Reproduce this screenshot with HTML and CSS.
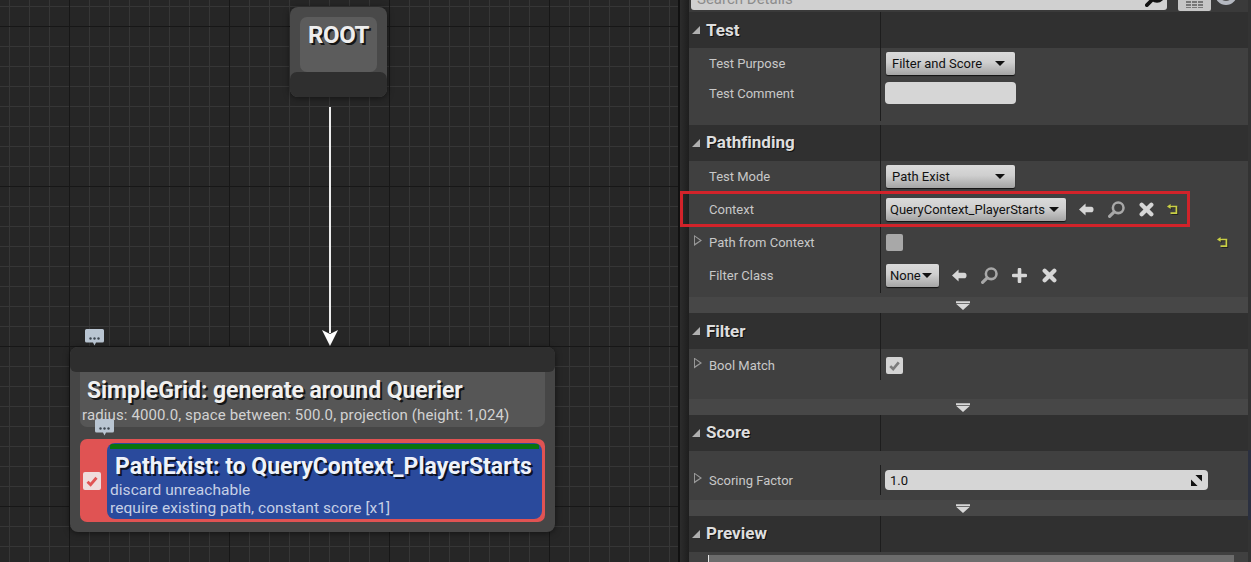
FILE: index.html
```html
<!DOCTYPE html>
<html lang="en">
<head>
    <meta charset="UTF-8">
    <title>Environment Query</title>
    <link rel="stylesheet" href="styles.css">
</head>
<body>

    <svg class="icon-defs" width="0" height="0">
        <symbol id="i-arrow" viewBox="0 0 16 14">
            <path d="M0 7 L7 0.5 V4 H13 Q15.5 4 15.5 7 Q15.5 10 13 10 H7 V13.5 Z" fill="currentColor"/>
        </symbol>
        <symbol id="i-search" viewBox="0 0 16 16">
            <circle cx="9.6" cy="6.4" r="5" fill="none" stroke="currentColor" stroke-width="2.4"/>
            <path d="M5.8 10.2 L1.5 14.5" stroke="currentColor" stroke-width="3" stroke-linecap="round"/>
        </symbol>
        <symbol id="i-close" viewBox="0 0 14 14">
            <path d="M2.5 2.5 L11.5 11.5 M11.5 2.5 L2.5 11.5" stroke="currentColor" stroke-width="4" stroke-linecap="round"/>
        </symbol>
        <symbol id="i-plus" viewBox="0 0 14 14">
            <path d="M7 1.5 V12.5 M1.5 7 H12.5" stroke="currentColor" stroke-width="3.4" stroke-linecap="round"/>
        </symbol>
        <symbol id="i-reset" viewBox="0 0 11 11">
            <path d="M0 2.5 L3.6 0 V5 Z" fill="currentColor"/>
            <path d="M3 2.5 H9.4 V9.2 H3.5" fill="none" stroke="currentColor" stroke-width="1.7"/>
        </symbol>
        <symbol id="i-bubble" viewBox="0 0 19 17">
            <path d="M1.5 0 H17.5 Q19 0 19 1.5 V12 Q19 13.5 17.5 13.5 H11 L9.5 16.5 L8 13.5 H1.5 Q0 13.5 0 12 V1.5 Q0 0 1.5 0 Z" fill="#b9c5d2"/>
            <circle cx="5.5" cy="9.5" r="1.2" fill="#3c4650"/>
            <circle cx="9.5" cy="9.5" r="1.2" fill="#3c4650"/>
            <circle cx="13.5" cy="9.5" r="1.2" fill="#3c4650"/>
        </symbol>
        <symbol id="i-check" viewBox="0 0 14 14">
            <path d="M3.5 7.5 L5.9 9.9 L10.5 4.5" fill="none" stroke="currentColor" stroke-width="2.2"/>
        </symbol>
        <symbol id="i-more" viewBox="0 0 16 10">
            <path d="M0 0 H16 V2 H0 Z M0 3 H16 L8 10 Z" fill="#d8d8d8"/>
        </symbol>
    </svg>

    <div class="app">

        <!-- graph -->
        <div class="canvas">
            <div class="root-node">
                <div class="root-inner">ROOT</div>
                <div class="root-foot"></div>
            </div>

            <div class="wire"></div>
            <svg class="wire-head" viewBox="0 0 16 16"><path d="M0 0 L8 4 L16 0 L8 16 Z" fill="#fff"/></svg>

            <svg class="bubble bubble-gen"><use href="#i-bubble"/></svg>

            <div class="query-node">
                <div class="query-head"></div>
                <div class="generator">
                    <div class="node-title gen-title">SimpleGrid: generate around Querier</div>
                    <div class="node-sub">radius: 4000.0, space between: 500.0, projection (height: 1,024)</div>
                </div>
                <div class="test-box">
                    <div class="test-toggle">
                        <span class="test-check"><svg><use href="#i-check"/></svg></span>
                    </div>
                    <div class="test-body">
                        <div class="test-bar"></div>
                        <div class="node-title test-title">PathExist: to QueryContext_PlayerStarts</div>
                        <div class="test-sub">discard unreachable</div>
                        <div class="test-sub">require existing path, constant score [x1]</div>
                    </div>
                </div>
            </div>

            <svg class="bubble bubble-test"><use href="#i-bubble"/></svg>
        </div>

        <div class="splitter"></div>

        <!-- details panel -->
        <div class="details">
            <div class="toolbar">
                <div class="search">
                    <span>Search Details</span>
                    <svg class="search-icon"><use href="#i-search"/></svg>
                </div>
                <div class="view-btn"><span></span></div>
                <div class="eye"></div>
            </div>

            <div class="section-head">Test</div>
            <div class="rows rows-test">
                <div class="row">
                    <div class="label">Test Purpose</div>
                    <div class="value"><div class="combo combo-md">Filter and Score</div></div>
                </div>
                <div class="row">
                    <div class="label">Test Comment</div>
                    <div class="value"><div class="text-input input-md"></div></div>
                </div>
            </div>

            <div class="section-head head-tight">Pathfinding</div>
            <div class="rows rows-path">
                <div class="row row-first">
                    <div class="label">Test Mode</div>
                    <div class="value"><div class="combo combo-md">Path Exist</div></div>
                </div>
                <div class="row row-tall">
                    <div class="label">Context</div>
                    <div class="value">
                        <div class="combo combo-lg">QueryContext_PlayerStarts</div>
                        <svg class="tool tool-first"><use href="#i-arrow"/></svg>
                        <svg class="tool tool-search"><use href="#i-search"/></svg>
                        <svg class="tool tool-after"><use href="#i-close"/></svg>
                        <svg class="reset reset-near"><use href="#i-reset"/></svg>
                    </div>
                </div>
                <div class="row row-tall">
                    <div class="label has-arrow">Path from Context</div>
                    <div class="value">
                        <div class="checkbox checkbox-off"></div>
                        <svg class="reset reset-far"><use href="#i-reset"/></svg>
                    </div>
                </div>
                <div class="row row-tall">
                    <div class="label">Filter Class</div>
                    <div class="value">
                        <div class="combo combo-sm">None</div>
                        <svg class="tool tool-first"><use href="#i-arrow"/></svg>
                        <svg class="tool tool-search"><use href="#i-search"/></svg>
                        <svg class="tool tool-after"><use href="#i-plus"/></svg>
                        <svg class="tool"><use href="#i-close"/></svg>
                    </div>
                </div>
            </div>
            <div class="expander"><svg><use href="#i-more"/></svg></div>

            <div class="section-head">Filter</div>
            <div class="rows rows-filter">
                <div class="row">
                    <div class="label has-arrow">Bool Match</div>
                    <div class="value">
                        <div class="checkbox"><svg><use href="#i-check"/></svg></div>
                    </div>
                </div>
            </div>
            <div class="expander"><svg><use href="#i-more"/></svg></div>

            <div class="section-head head-tight">Score</div>
            <div class="rows rows-score">
                <div class="row">
                    <div class="label has-arrow">Scoring Factor</div>
                    <div class="value">
                        <div class="text-input input-wide">
                            <span>1.0</span>
                            <svg class="scrub" viewBox="0 0 10 10"><path d="M4 0 H10 V6 Z M0 4 L6 10 H0 Z" fill="#111"/></svg>
                        </div>
                    </div>
                </div>
            </div>
            <div class="expander"><svg><use href="#i-more"/></svg></div>

            <div class="section-head head-tight">Preview</div>
            <div class="preview-body"><div class="preview-bar"></div></div>

            <div class="highlight"></div>
            <div class="scroll-thumb"></div>
        </div>
    </div>

</body>
</html>
```

FILE: styles.css
```css
/* page */
html, body {
    margin: 0;
    padding: 0;
    height: 100%;
    overflow: hidden;
    background: #262626;
    font-family: 'Roboto', sans-serif;
    font-variant-ligatures: none;
}

.icon-defs {
    position: absolute;
}

.app {
    display: flex;
    width: 1251px;
    height: 562px;
}

/* graph canvas */
.canvas {
    position: relative;
    width: 678px;
    flex: none;
    overflow: hidden;
    background-color: #262626;
    background-image:
        linear-gradient(to right, #171717 1px, transparent 1px),
        linear-gradient(to bottom, #171717 1px, transparent 1px),
        linear-gradient(to right, #363636 1px, transparent 1px),
        linear-gradient(to bottom, #363636 1px, transparent 1px);
    background-size: 160px 160px, 160px 160px, 20px 20px, 20px 20px;
    background-position: 69px 0, 0 26px, 9px 0, 0 6px;
}

.root-node {
    position: absolute;
    left: 290px;
    top: 7px;
    width: 97px;
    height: 90px;
    background: #494949;
    border-radius: 8px;
    box-shadow: 0 1px 6px rgba(0, 0, 0, 0.5);
    display: flex;
    flex-direction: column;
    overflow: hidden;
}

.root-inner {
    margin: 10px 10px 0;
    height: 55px;
    flex: none;
    background: #5c5c5c;
    border-radius: 7px;
    text-align: center;
    color: #eee;
    font-size: 24px;
    font-weight: 700;
    line-height: 37px;
    letter-spacing: -0.4px;
    text-shadow: 2px 2px 0 #151515;
}

.root-foot {
    flex: 1;
    background: #2f2f2f;
    border-radius: 7px 7px 0 0;
}

.wire {
    position: absolute;
    left: 329px;
    top: 107px;
    width: 2px;
    height: 226px;
    background: #ececec;
}

.wire-head {
    position: absolute;
    left: 322px;
    top: 330px;
    width: 16px;
    height: 16px;
}

.bubble {
    position: absolute;
    width: 19px;
    height: 17px;
}

.bubble-gen {
    left: 85px;
    top: 329px;
}

.bubble-test {
    left: 95px;
    top: 419px;
}

.query-node {
    position: absolute;
    left: 70px;
    top: 347px;
    width: 485px;
    height: 185px;
    background: #464646;
    border-radius: 8px;
    box-shadow: 0 1px 6px rgba(0, 0, 0, 0.5);
}

.query-head {
    height: 25px;
    background: #2e2e2e;
    border-radius: 8px 8px 6px 6px;
}

.generator {
    margin: 0 10px;
    height: 55px;
    background: #565656;
    border-radius: 0 0 7px 7px;
    padding-left: 2px;
}

.node-title {
    padding-left: 5px;
    color: #f0f0f0;
    font-size: 23px;
    font-weight: 700;
    line-height: 36px;
    white-space: nowrap;
    text-shadow: 2px 2px 0 #151515;
}

.gen-title {
    padding-top: 1px;
    margin-bottom: -1px;
    letter-spacing: -0.08px;
}

.node-sub {
    color: #d2d2d2;
    font-size: 15px;
    line-height: 15px;
    letter-spacing: 0.12px;
    white-space: nowrap;
}

.test-box {
    display: flex;
    margin: 12px 10px 0;
    height: 83px;
    background: #e05353;
    border-radius: 7px;
}

.test-toggle {
    width: 27px;
    flex: none;
    padding: 33px 0 0 3px;
    box-sizing: border-box;
}

.test-check {
    display: block;
    width: 18px;
    height: 18px;
    background: #efdcdc;
    border-radius: 2px;
    color: #e05353;
}

.test-check svg {
    display: block;
    width: 18px;
    height: 18px;
}

.test-body {
    flex: 1;
    margin: 4px 3px 3px 0;
    padding: 1px 3px 0;
    background: #2a4a9c;
    border-radius: 8px;
}

.test-bar {
    height: 5px;
    background: #08730e;
    border-radius: 2px 2px 0 0;
}

.test-title {
    color: #eef2fa;
    text-shadow: 2px 2px 0 #0b1226;
    line-height: 36px;
    margin-bottom: -4px;
}

.test-sub {
    color: #c6d0e6;
    font-size: 15.5px;
    line-height: 18px;
    letter-spacing: 0.05px;
    white-space: nowrap;
}

/* splitter between graph and details */
.splitter {
    width: 11px;
    flex: none;
    background: linear-gradient(to right, #111 0, #111 2px, #2c2c2c 2px, #1e1e1e 100%);
}

/* details panel */
.details {
    position: relative;
    flex: 1;
    min-width: 0;
    background: #333;
    padding-right: 3px;
    color: #c8c8c8;
    font-size: 13px;
}

.toolbar {
    display: flex;
    align-items: flex-end;
    height: 12px;
    overflow: hidden;
    background: #3a3a3a;
}

.search {
    display: flex;
    align-items: center;
    justify-content: space-between;
    width: 476px;
    height: 23px;
    flex: none;
    margin: 0 0 2px 2px;
    padding: 0 2px 0 6px;
    box-sizing: border-box;
    background: #d0d0d0;
    border-radius: 0 0 3px 3px;
    color: #8c8c8c;
    font-size: 15px;
}

.search-icon {
    width: 20px;
    height: 20px;
    color: #111;
    margin-top: -4px;
}

.view-btn {
    width: 33px;
    height: 20px;
    margin: 0 0 1px 11px;
    flex: none;
    background: #c6c6c6;
    border-radius: 2px;
    display: flex;
    align-items: flex-end;
    justify-content: center;
}

.view-btn span {
    width: 17px;
    height: 7px;
    margin-bottom: 3px;
    background:
        repeating-linear-gradient(to right, transparent 0 5px, #c6c6c6 5px 6px),
        repeating-linear-gradient(to bottom, #777 0 2px, #c6c6c6 2px 3px);
}

.eye {
    width: 22px;
    height: 22px;
    margin: 0 0 7px 4px;
    flex: none;
    box-sizing: border-box;
    border: 4px solid #b4b8c0;
    border-radius: 50%;
    background: #555;
}

.section-head {
    height: 36px;
    box-sizing: border-box;
    padding-left: 17px;
    position: relative;
    background-color: #303030;
    background-image: linear-gradient(#1d1d1d, #1d1d1d);
    background-repeat: no-repeat;
    background-size: 1px 100%;
    background-position: 191px 0;
    color: #dedede;
    font-size: 17px;
    font-weight: 700;
    line-height: 36px;
    text-shadow: 1px 1px 0 #111;
}

.head-tight {
    line-height: 34px;
}

.section-head::before {
    content: "";
    position: absolute;
    left: 3px;
    top: 14px;
    border-style: solid;
    border-width: 0 0 8px 8px;
    border-color: transparent transparent #b0b0b0 transparent;
}

.rows {
    background-color: #404040;
    background-image: linear-gradient(#1d1d1d, #1d1d1d);
    background-repeat: no-repeat;
    background-position: 191px 0;
    box-sizing: border-box;
}

.rows-test {
    height: 77px;
    background-size: 1px 73px;
}

.rows-path {
    height: 136px;
    background-size: 1px 132px;
}

.rows-filter {
    height: 50px;
    padding-top: 1px;
    background-size: 1px 31px;
}

.rows-score {
    height: 49px;
    padding-top: 14px;
    background-position: 191px 14px;
    background-size: 1px 30px;
}

.row {
    display: flex;
    align-items: center;
    height: 30px;
}

.row-first {
    height: 32px;
    padding-bottom: 1px;
    box-sizing: border-box;
}

.row-tall {
    height: 33px;
}

.label {
    position: relative;
    width: 191px;
    flex: none;
    box-sizing: border-box;
    padding-left: 20px;
    white-space: nowrap;
}

.has-arrow::before {
    content: "";
    position: absolute;
    left: 5px;
    top: 0;
    width: 8px;
    height: 11px;
    background: #999;
    clip-path: polygon(0 0, 100% 50%, 0 100%, 0 85%, 75% 50%, 12% 15%, 12% 85%, 0 85%);
}

.value {
    display: flex;
    align-items: center;
    flex: 1;
    padding-left: 5px;
    position: relative;
}

/* inputs */
.combo {
    position: relative;
    height: 23px;
    box-sizing: border-box;
    padding-left: 6px;
    line-height: 23px;
    color: #111;
    font-size: 13px;
    white-space: nowrap;
    background: linear-gradient(#dadada, #cfcfcf 45%, #a4a4a4);
    border-radius: 2px;
    box-shadow: 0 1px 1px #111;
    margin-left: 1px;
}

.combo::after {
    content: "";
    position: absolute;
    right: 10px;
    top: 9px;
    border-style: solid;
    border-width: 5px 5px 0 5px;
    border-color: #111 transparent transparent transparent;
}

.combo-md {
    width: 129px;
}

.combo-lg {
    width: 180px;
    padding-left: 4px;
}

.combo-lg::after {
    right: 7px;
}

.combo-sm {
    width: 53px;
    padding-left: 4px;
}

.combo-sm::after {
    right: 7px;
}

.text-input {
    display: flex;
    align-items: center;
    justify-content: space-between;
    box-sizing: border-box;
    background: #d6d6d6;
    border-radius: 4px;
    color: #111;
}

.input-md {
    width: 131px;
    height: 22px;
}

.input-wide {
    width: 323px;
    height: 20px;
    padding: 0 6px 0 5px;
}

.scrub {
    width: 11px;
    height: 11px;
}

.checkbox {
    width: 17px;
    height: 17px;
    margin-left: 1px;
    background: #d4d4d4;
    border-radius: 2px;
    color: #7c7c7c;
}

.checkbox svg {
    display: block;
    width: 17px;
    height: 17px;
}

.checkbox-off {
    background: #a8a8a8;
}

.tool {
    width: 15px;
    height: 15px;
    margin-left: 15px;
    flex: none;
    color: #d6d6d6;
}

.tool-first {
    margin-left: 13px;
}

.tool-search {
    width: 17px;
    height: 17px;
    margin-left: 14px;
    color: #a8a8a8;
}

.tool-after {
    margin-left: 14px;
}

.reset {
    width: 11px;
    height: 11px;
    flex: none;
    color: #c9cf45;
    filter: drop-shadow(1px 1px 0 #222);
}

.reset-near {
    margin-left: 13px;
}

.reset-far {
    margin-left: 314px;
}

/* advanced expander strip */
.expander {
    display: flex;
    align-items: center;
    justify-content: center;
    height: 16px;
    padding-right: 12px;
    background: #474747;
}

.expander svg {
    width: 14px;
    height: 9px;
}

.preview-body {
    height: 10px;
    padding: 3px 14px 0 19px;
    box-sizing: border-box;
    background: #404040;
}

.preview-bar {
    height: 7px;
    background: #6c6c6c;
    border-left: 1px solid #e8e8e8;
}

/* red annotation around the Context row */
.highlight {
    position: absolute;
    left: -9px;
    top: 191px;
    width: 510px;
    height: 36px;
    box-sizing: border-box;
    border: 3px solid #d2232a;
}

.scroll-thumb {
    position: absolute;
    right: 0;
    top: 450px;
    width: 3px;
    height: 70px;
    background: #2b3040;
}
```
